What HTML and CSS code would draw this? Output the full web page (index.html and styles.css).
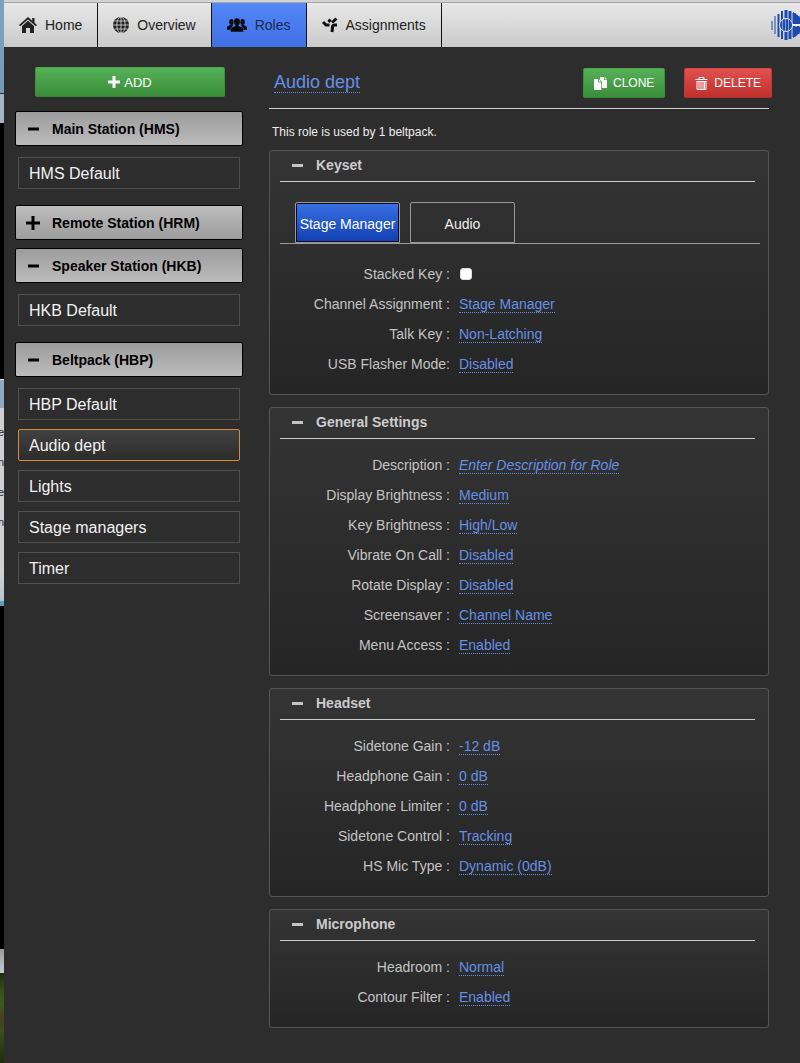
FILE: index.html
```html
<!DOCTYPE html>
<html lang="en">
<head>
  <meta charset="utf-8">
  <title>Roles</title>
  <link rel="stylesheet" href="styles.css">
</head>
<body>
  <!-- Desktop showing beside the window -->
  <div class="desktop-edge" aria-hidden="true">
    <div class="edge-sky"></div>
    <div class="edge-haze"></div>
    <div class="edge-dark"></div>
    <div class="edge-window">
      <span>e</span>
      <span>n</span>
      <span>e</span>
      <span>n</span>
    </div>
    <div class="edge-dark edge-dark-tall"></div>
    <div class="edge-dock"></div>
    <div class="edge-grass"></div>
  </div>

  <div class="app">
    <header class="topbar">
      <nav class="nav">
        <a class="nav-item" href="#home">
          <svg class="nav-icon nav-icon-home" viewBox="0 0 18 16"><path d="M9 0 0 8l1.2 1.3L9 2.4l7.800 6.900L18 8l-2.500-2.200V1h-2.300v2.800z"/><path d="M9 3.700 3 9v7h4v-5h4v5h4V9z"/></svg>
          Home
        </a>
        <a class="nav-item" href="#overview">
          <svg class="nav-icon" viewBox="0 0 16 16"><circle cx="8" cy="8" r="8"/><g fill="none" stroke="#ddd" stroke-width=".8"><path d="M8 0v16M0 8h16M1.500 4h13M1.500 12h13"/><ellipse cx="8" cy="8" rx="4.200" ry="8"/></g></svg>
          Overview
        </a>
        <a class="nav-item active" href="#roles">
          <svg class="nav-icon nav-icon-wide" viewBox="0 0 20 14"><ellipse cx="4.500" cy="4" rx="2.300" ry="3"/><ellipse cx="15.500" cy="4" rx="2.300" ry="3"/><path d="M0 12V9.500Q0 8 3 7h3l-2 5zM20 12V9.500Q20 8 17 7h-3l2 5z"/><path stroke="#4a7df0" stroke-width=".5" d="M10 0c2.200 0 3.500 1.500 3.300 3.800-.1 1.500-.7 2.700-1.500 3.400v.8c2 .8 4.700 1.300 4.700 3.200V14h-13v-2.800C3.500 9.300 6.200 8.800 8.200 8v-.8C7.400 6.500 6.800 5.300 6.700 3.800 6.500 1.500 7.800 0 10 0z"/></svg>
          Roles
        </a>
        <a class="nav-item" href="#assignments">
          <svg class="nav-icon" viewBox="0 0 16 16"><path fill="none" stroke="#111" stroke-width="3" d="M1 5 4 8h3.500M6.500 5 8.500 2.500M14.500 1.500 10 5.500M15 8h-2.500q-2.500 .5-2 3l-.5 4"/></svg>
          Assignments
        </a>
      </nav>
      <svg class="logo" viewBox="0 0 29 30">
        <g fill="none" stroke="#1d49ad">
          <path stroke-width="1" d="M1 11v9M4 6v18"/>
          <path stroke-width="2" d="M7.500 4v23M11 1v28"/>
          <path stroke-width="3" d="M15 0v30M19 1v28M23 3v24M27 6v18"/>
        </g>
        <path fill="#1d49ad" d="M22 2q4 2 7 6v6h-7zM22 28q4-2 7-6v-5h-7z"/>
        <circle cx="15" cy="15" r="6.500" fill="#1d49ad" stroke="#dde4f3" stroke-width="1"/>
        <path stroke="#9fb4e0" stroke-width=".8" d="M11.500 10v10M14.500 9v12M17.500 9v12"/>
        <path stroke="#eee" stroke-width="2" d="M21 15h8"/>
      </svg>
    </header>

    <div class="layout">
      <aside class="sidebar">
        <button class="btn btn-green btn-add" type="button">
          <svg class="icon-add" viewBox="0 0 12 12"><path d="M4.500 0h3v4.500H12v3H7.500V12h-3V7.500H0v-3h4.500z"/></svg>
          ADD
        </button>

        <section class="group">
          <button class="group-header" type="button"><svg class="sign" viewBox="0 0 14 14"><path d="M2 5.500h11v3H2z"/></svg>Main Station (HMS)</button>
          <div class="group-items">
            <a class="role" href="#hms-default">HMS Default</a>
          </div>
        </section>

        <section class="group">
          <button class="group-header light" type="button"><svg class="sign" viewBox="0 0 14 14"><path d="M5.500 0h3v5.500H14v3H8.500V14h-3V8.500H0v-3h5.500z"/></svg>Remote Station (HRM)</button>
        </section>

        <section class="group">
          <button class="group-header" type="button"><svg class="sign" viewBox="0 0 14 14"><path d="M2 5.500h11v3H2z"/></svg>Speaker Station (HKB)</button>
          <div class="group-items">
            <a class="role" href="#hkb-default">HKB Default</a>
          </div>
        </section>

        <section class="group">
          <button class="group-header" type="button"><svg class="sign" viewBox="0 0 14 14"><path d="M2 5.500h11v3H2z"/></svg>Beltpack (HBP)</button>
          <div class="group-items">
            <a class="role" href="#hbp-default">HBP Default</a>
            <a class="role selected" href="#audio-dept">Audio dept</a>
            <a class="role" href="#lights">Lights</a>
            <a class="role" href="#stage-managers">Stage managers</a>
            <a class="role" href="#timer">Timer</a>
          </div>
        </section>
      </aside>

      <main class="content">
        <div class="content-header">
          <h1 class="title"><a class="editable" href="#name">Audio dept</a></h1>
          <div class="actions">
            <button class="btn btn-small btn-green" type="button">
              <svg class="icon-clone" viewBox="0 0 13 13"><path d="M6 0h4v3h3v8H8V4.500L6 2.500z"/><path d="M10.700 0 13 2.300h-2.300zM0 2h4v3.500h3.300V13H0zM4.800 2l2.500 2.700H4.800z"/></svg>
              CLONE
            </button>
            <button class="btn btn-small btn-red" type="button">
              <svg class="icon-trash" viewBox="0 0 12 13"><path fill="none" stroke="#fff" d="M3.500 2V.5h5V2M0 2.500h12M1.500 4v8.500h9V4M3.500 4v8M5.500 4v8M7.500 4v8M9 4v8M1 4.500h10"/></svg>
              DELETE
            </button>
          </div>
        </div>

        <p class="usage">This role is used by 1 beltpack.</p>

        <!-- Keyset -->
        <section class="panel">
          <h2 class="panel-header"><button class="panel-toggle" type="button"><span class="minus"></span>Keyset</button></h2>
          <div class="key-tabs">
            <button class="key-tab active" type="button">Stage Manager</button>
            <button class="key-tab" type="button">Audio</button>
          </div>
          <div class="rows">
            <div class="row"><label class="label" for="stackedKey">Stacked Key :</label><input class="check" type="checkbox" id="stackedKey"></div>
            <div class="row"><span class="label">Channel Assignment :</span><a class="editable" href="#channel">Stage Manager</a></div>
            <div class="row"><span class="label">Talk Key :</span><a class="editable" href="#talk">Non-Latching</a></div>
            <div class="row"><span class="label">USB Flasher Mode:</span><a class="editable" href="#flasher">Disabled</a></div>
          </div>
        </section>

        <!-- General Settings -->
        <section class="panel">
          <h2 class="panel-header"><button class="panel-toggle" type="button"><span class="minus"></span>General Settings</button></h2>
          <div class="rows">
            <div class="row"><span class="label">Description :</span><a class="editable empty" href="#description">Enter Description for Role</a></div>
            <div class="row"><span class="label">Display Brightness :</span><a class="editable" href="#display">Medium</a></div>
            <div class="row"><span class="label">Key Brightness :</span><a class="editable" href="#keys">High/Low</a></div>
            <div class="row"><span class="label">Vibrate On Call :</span><a class="editable" href="#vibrate">Disabled</a></div>
            <div class="row"><span class="label">Rotate Display :</span><a class="editable" href="#rotate">Disabled</a></div>
            <div class="row"><span class="label">Screensaver :</span><a class="editable" href="#screensaver">Channel Name</a></div>
            <div class="row"><span class="label">Menu Access :</span><a class="editable" href="#menu">Enabled</a></div>
          </div>
        </section>

        <!-- Headset -->
        <section class="panel">
          <h2 class="panel-header"><button class="panel-toggle" type="button"><span class="minus"></span>Headset</button></h2>
          <div class="rows">
            <div class="row"><span class="label">Sidetone Gain :</span><a class="editable" href="#sidetone-gain">-12 dB</a></div>
            <div class="row"><span class="label">Headphone Gain :</span><a class="editable" href="#headphone-gain">0 dB</a></div>
            <div class="row"><span class="label">Headphone Limiter :</span><a class="editable" href="#limiter">0 dB</a></div>
            <div class="row"><span class="label">Sidetone Control :</span><a class="editable" href="#sidetone-control">Tracking</a></div>
            <div class="row"><span class="label">HS Mic Type :</span><a class="editable" href="#mic-type">Dynamic (0dB)</a></div>
          </div>
        </section>

        <!-- Microphone -->
        <section class="panel">
          <h2 class="panel-header"><button class="panel-toggle" type="button"><span class="minus"></span>Microphone</button></h2>
          <div class="rows">
            <div class="row"><span class="label">Headroom :</span><a class="editable" href="#headroom">Normal</a></div>
            <div class="row"><span class="label">Contour Filter :</span><a class="editable" href="#contour">Enabled</a></div>
          </div>
        </section>
      </main>
    </div>
  </div>
</body>
</html>
```

FILE: styles.css
```css
* {
  box-sizing: border-box;
}
body {
  display: flex;
  min-height: 100vh;
  margin: 0;
  font-family: "Liberation Sans", Arial, sans-serif;
  font-size: 14px;
  color: #c4c4c4;
  background-color: #2d2d2d;
}
button {
  font-family: inherit;
  cursor: pointer;
}
a {
  text-decoration: none;
}

/* Desktop edge */
.desktop-edge {
  display: flex;
  flex-direction: column;
  flex: none;
  width: 4px;
  overflow: hidden;
}
.edge-sky {
  height: 94px;
  background: linear-gradient(#7da3c4, #7898b6);
  border-bottom: 1px solid #26303c;
}
.edge-haze {
  height: 29px;
  background-color: #a5b3c2;
}
.edge-dark {
  height: 256px;
  background-color: #000;
}
.edge-dark-tall {
  height: 343px;
}
.edge-window {
  height: 227px;
  padding-top: 37px;
  background: linear-gradient(#8fa9c2 28px, #d0d0d2 28px, #d0d0d2 190px, #bac5ce 221px, #5f9dbb 221px);
  border-top: 1px solid #ddd;
}
.edge-window span {
  display: flex;
  justify-content: flex-end;
  height: 30px;
  font-size: 11px;
  line-height: 30px;
  color: #222;
}
.edge-dock {
  height: 24px;
  background: linear-gradient(#999, #c6ccd4);
}
.edge-grass {
  flex: 1;
  background: linear-gradient(#1d2b10, #35501a 20%, #3e5a1c 35%, #4a3d22 50%, #3b4d1d 65%, #1f2c10);
}

/* Top bar */
.app {
  flex: 1;
  min-width: 0;
}
.topbar {
  display: flex;
  justify-content: space-between;
  height: 47px;
  padding-top: 2px;
  background: linear-gradient(#eaeaea, #cacaca);
  box-shadow: inset 0 2px #d4d4d4, inset 0 3px #a6a6a6;
}
.nav {
  display: flex;
  padding-top: 1px;
}
.nav-item {
  display: flex;
  align-items: center;
  gap: 8px;
  padding: 0 15px;
  color: #222;
  border-right: 1px solid #111;
}
.nav-item.active {
  color: #1c2b52;
  background: linear-gradient(#5288f8, #4070e4);
}
.nav-icon {
  width: 16px;
  height: 16px;
  fill: #222;
}
.nav-icon-home {
  width: 18px;
}
.nav-icon-wide {
  width: 20px;
  fill: #05070c;
}
.logo {
  width: 29px;
  height: 30px;
  margin-top: 8px;
}

/* Sidebar */
.layout {
  display: flex;
}
.sidebar {
  flex: none;
  width: 265px;
  padding: 20px 26px 0 11px;
}
.btn {
  display: flex;
  align-items: center;
  justify-content: center;
  gap: 6px;
  height: 30px;
  padding: 0 10px;
  font-size: 13px;
  color: #fff;
  border: 1px solid;
  border-radius: 2px;
}
.btn svg {
  fill: #fff;
}
.btn-small {
  font-size: 12px;
}
.btn-green {
  background: linear-gradient(#56b156, #3a8d3a);
  border-color: #4da44d #3d923d #358535;
}
.btn-red {
  background: linear-gradient(#e0514d, #bf312d);
  border-color: #d44a46 #c43935 #b02d29;
}
.btn-add {
  gap: 4px;
  width: 190px;
  margin: 0 0 14px 20px;
}
.icon-add {
  width: 12px;
  height: 12px;
}
.icon-clone,
.icon-trash {
  width: 13px;
  height: 13px;
}
.group-header {
  display: flex;
  align-items: center;
  gap: 12px;
  width: 100%;
  height: 35px;
  margin-bottom: 8px;
  padding: 0 10px;
  font-size: 14px;
  font-weight: bold;
  color: #000;
  background: linear-gradient(#9c9c9c, #bcbcbc);
  border: 1px solid #000;
  border-radius: 2px;
}
.group-header.light {
  background: linear-gradient(#bebebe, #9c9c9c);
}
.sign {
  width: 14px;
  height: 14px;
}
.group-items {
  display: flex;
  flex-direction: column;
  gap: 9px;
  padding: 3px 3px 16px;
}
.role {
  height: 32px;
  padding: 1px 10px 0;
  font-size: 16px;
  line-height: 30px;
  color: #f2f2f2;
  border: 1px solid #505050;
}
.role.selected {
  background: linear-gradient(#414141, #2c2c2c);
  border-color: #d98b3a;
  border-radius: 2px;
}

/* Content */
.content {
  flex: 1;
  min-width: 0;
  padding: 21px 31px 35px 0;
}
.content-header {
  display: flex;
  justify-content: space-between;
  height: 41px;
  border-bottom: 1px solid #d0d0d0;
}
.title {
  margin: 4px 0 0 5px;
  font-size: 18px;
  font-weight: normal;
  line-height: 20px;
}
.actions {
  display: flex;
  gap: 19px;
  margin-right: -3px;
}
.editable {
  color: #6690e6;
  border-bottom: 1px dotted #6690e6;
}
.empty {
  font-style: italic;
}
.usage {
  margin: 16px 3px 11px;
  font-size: 12px;
  line-height: 14px;
  color: #eee;
}
.panel {
  margin-bottom: 12px;
  padding: 0 8px 0 10px;
  background: linear-gradient(#343434, #252525);
  border: 1px solid #555;
  border-radius: 3px;
}
.panel:last-child {
  margin-bottom: 0;
}
.panel-header {
  margin: 0 5px 0 0;
  font-size: 14px;
  border-bottom: 1px solid #ccc;
}
.panel-toggle {
  display: flex;
  align-items: center;
  gap: 13px;
  height: 30px;
  padding: 0 12px 2px;
  font-size: 14px;
  font-weight: bold;
  color: #ccc;
  background: none;
  border: none;
}
.minus {
  width: 11px;
  height: 3px;
  background-color: #c4c4c4;
}
.key-tabs {
  display: flex;
  gap: 10px;
  margin-top: 20px;
  padding-left: 15px;
  border-bottom: 1px solid #999;
}
.key-tab {
  width: 105px;
  height: 41px;
  padding: 2px 0 0;
  font-size: 14px;
  color: #eee;
  white-space: nowrap;
  background: none;
  border: 1px solid #999;
  border-radius: 2px 2px 0 0;
}
.key-tab.active {
  color: #fff;
  background: linear-gradient(#3a70e2, #1140b2);
  box-shadow: inset 0 0 0 1px #000a28;
}
.rows {
  padding: 11px 0 15px;
}
.key-tabs + .rows {
  padding-top: 15px;
}
.row {
  display: flex;
  align-items: center;
  gap: 9px;
  height: 30px;
  line-height: 16px;
}
.label {
  flex: none;
  width: 170px;
  text-align: right;
}
.check {
  appearance: none;
  width: 12px;
  height: 12px;
  margin: 0 1px;
  background-color: #fff;
  border: 1px solid #ddd;
  border-radius: 3px;
}
.check:checked {
  background-color: #3a70e2;
}
```
